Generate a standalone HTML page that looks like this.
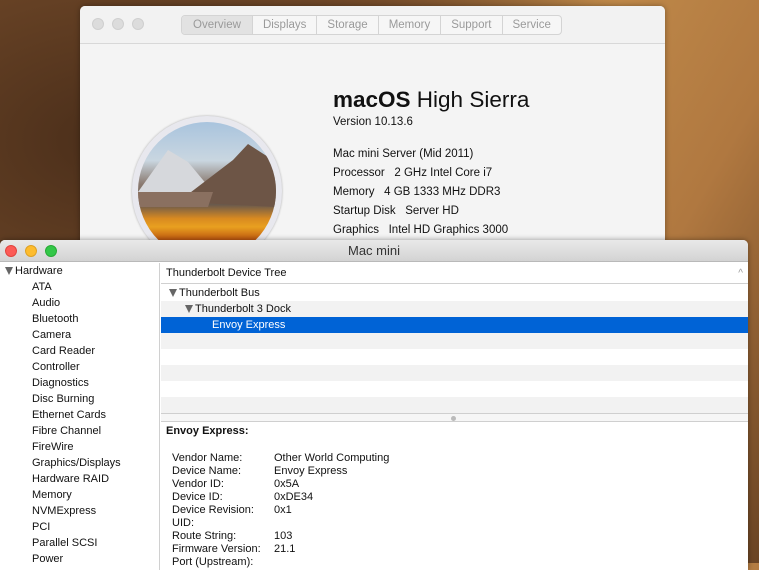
<!DOCTYPE html>
<html><head><meta charset="utf-8"><style>
*{margin:0;padding:0;box-sizing:border-box}
body{width:759px;height:563px;overflow:hidden;position:relative;font-family:"Liberation Sans",sans-serif;
background:radial-gradient(ellipse at 15% 25%,#4a2e1a 0%,#6a4426 30%,transparent 60%),
linear-gradient(120deg,#3a2416 0%,#8a5a30 30%,#c08a4a 55%,#b07840 75%,#6a4424 100%);}
.abs{position:absolute}
.about{left:80px;top:6px;width:585px;height:240px;background:#f4f4f4;border-radius:5px 5px 0 0;box-shadow:0 0 6px rgba(0,0,0,.35)}
.abar{height:38px;border-bottom:1px solid #d8d8d8;background:#f2f2f2;border-radius:5px 5px 0 0}
.dot{position:absolute;width:12px;height:12px;border-radius:50%}
.tabs{position:absolute;left:101px;top:9px;height:20px;display:flex;border:1px solid #d4d4d4;border-radius:4px;background:#f6f6f6;font-size:11.5px;color:#9a9a9a}
.tabs div{padding:0 10px;line-height:18px;border-left:1px solid #d4d4d4}
.tabs div:first-child{border-left:none;background:#e2e2e2;border-radius:3px 0 0 3px;padding:0 11px}
.info{font-size:11.5px;color:#111}
.win{left:0;top:240px;width:748px;height:330px;background:#fff;border-radius:5px 5px 0 0;box-shadow:0 0 6px rgba(0,0,0,.4)}
.wbar{height:22px;background:linear-gradient(#e9e9e9,#d3d3d3);border-bottom:1px solid #b9b9b9;border-radius:5px 5px 0 0;text-align:center;font-size:13px;line-height:22px;color:#333}
.side{position:absolute;left:0;top:23px;width:160px;bottom:0;border-right:1px solid #d0d0d0;font-size:11px;color:#111}
.side div{height:16px;line-height:16px;padding-left:32px}
.row{position:absolute;left:161px;width:587px;height:16px;font-size:11px;line-height:17px;color:#111}
.det{font-size:11px;color:#111;line-height:13px}
.tri{display:inline-block;width:0;height:0;border-left:4.5px solid transparent;border-right:4.5px solid transparent;border-top:8px solid #666;margin-right:2px;vertical-align:-1px}
</style></head><body>
<div class="abs about">
 <div class="abar">
  <div class="dot" style="left:12px;top:12px;background:#dcdcdc;border:1px solid #cfcfcf"></div>
  <div class="dot" style="left:32px;top:12px;background:#dcdcdc;border:1px solid #cfcfcf"></div>
  <div class="dot" style="left:52px;top:12px;background:#dcdcdc;border:1px solid #cfcfcf"></div>
  <div class="tabs"><div>Overview</div><div>Displays</div><div>Storage</div><div>Memory</div><div>Support</div><div>Service</div></div>
 </div>
 <div class="abs" style="left:52px;top:110px;width:150px;height:150px;border-radius:50%;background:#e8e8ee;box-shadow:0 0 2px #aaa"></div>
 <div class="abs" style="left:58px;top:116px;width:138px;height:138px;border-radius:50%;overflow:hidden;background:linear-gradient(#a9c4de 0%,#c9d6e0 28%,#8a7a70 45%,#6a5a4c 60%,#d98a20 70%,#e8a020 76%,#c05a10 85%,#7a2a0a 100%)">
  <svg class="abs" style="left:0;top:0" width="138" height="138"><polygon points="0,70 30,28 50,40 75,70" fill="#d6d8dc"/><polygon points="40,80 95,38 110,22 138,40 138,85" fill="#6d5546"/><polygon points="0,70 75,70 70,85 0,85" fill="#8a7060"/></svg>
 </div>
 <div class="abs" style="left:253px;top:81px;font-size:22.5px;color:#111"><b>macOS</b> High Sierra</div>
 <div class="abs info" style="left:253px;top:110px">Version 10.13.6</div>
 <div class="abs info" style="left:253px;top:142px">Mac mini Server (Mid 2011)</div>
 <div class="abs info" style="left:253px;top:161px">Processor&nbsp;&nbsp; 2 GHz Intel Core i7</div>
 <div class="abs info" style="left:253px;top:180px">Memory&nbsp;&nbsp; 4 GB 1333 MHz DDR3</div>
 <div class="abs info" style="left:253px;top:199px">Startup Disk&nbsp;&nbsp; Server HD</div>
 <div class="abs info" style="left:253px;top:218px">Graphics&nbsp;&nbsp; Intel HD Graphics 3000</div>
</div>
<div class="abs win">
 <div class="wbar">Mac mini
  <div class="dot" style="left:5px;top:5px;background:#fc5b57;border:1px solid #e0443e"></div>
  <div class="dot" style="left:25px;top:5px;background:#fdbc2e;border:1px solid #dea123"></div>
  <div class="dot" style="left:45px;top:5px;background:#33c748;border:1px solid #27aa35"></div>
 </div>
 <div class="side">
  <div style="padding-left:5px"><span class="tri"></span>Hardware</div>
  <div>ATA</div><div>Audio</div><div>Bluetooth</div><div>Camera</div><div>Card Reader</div><div>Controller</div><div>Diagnostics</div><div>Disc Burning</div><div>Ethernet Cards</div><div>Fibre Channel</div><div>FireWire</div><div>Graphics/Displays</div><div>Hardware RAID</div><div>Memory</div><div>NVMExpress</div><div>PCI</div><div>Parallel SCSI</div><div>Power</div>
 </div>
 <div class="row" style="top:22px;height:22px;line-height:23px;border-bottom:1px solid #d0d0d0;padding-left:5px">Thunderbolt Device Tree<span style="position:absolute;right:5px;color:#999;font-size:10px">^</span></div>
 <div class="row" style="top:45px;padding-left:8px"><span class="tri"></span>Thunderbolt Bus</div>
 <div class="row" style="top:61px;background:#f2f2f2;padding-left:24px"><span class="tri"></span>Thunderbolt 3 Dock</div>
 <div class="row" style="top:77px;background:#0063d6;color:#fff;padding-left:51px">Envoy Express</div>
 <div class="row" style="top:93px;background:#f2f2f2"></div>
 <div class="row" style="top:125px;background:#f2f2f2"></div>
 <div class="row" style="top:157px;background:#f2f2f2"></div>
 <div class="row" style="top:173px;height:9px;background:#f6f6f6;border-top:1px solid #cfcfcf;border-bottom:1px solid #cfcfcf"><div style="position:absolute;left:290px;top:2px;width:5px;height:5px;border-radius:50%;background:#bbb"></div></div>
 <div class="abs det" style="left:166px;top:185px"><b>Envoy Express:</b></div>
 <div class="abs det" style="left:172px;top:212px">Vendor Name:<br>Device Name:<br>Vendor ID:<br>Device ID:<br>Device Revision:<br>UID:<br>Route String:<br>Firmware Version:<br>Port (Upstream):</div>
 <div class="abs det" style="left:274px;top:212px">Other World Computing<br>Envoy Express<br>0x5A<br>0xDE34<br>0x1<br>&nbsp;<br>103<br>21.1</div>
</div>
</body></html>
